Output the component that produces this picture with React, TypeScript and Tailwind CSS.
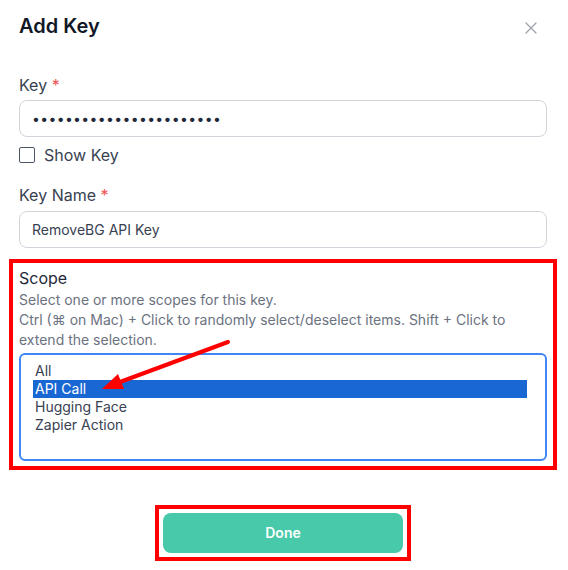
import { X } from 'lucide-react';

const scopes = ['All', 'API Call', 'Hugging Face', 'Zapier Action'];

function Label({ text, className = '' }: { text: string; className?: string }) {
    return (
        <div className={`text-base leading-6 text-[#374151] ${className}`}>
            {text} <span className="text-[#f05252]">*</span>
        </div>
    );
}

export default function App() {
    return (
        <div className="relative h-[570px] w-[568px] overflow-hidden bg-white pr-[21px] pl-[19px] font-[Inter,sans-serif]">
            <div className="flex items-center justify-between pt-[12px]">
                <h2 className="text-[20px] leading-7 font-semibold text-[#111827]">Add Key</h2>
                <X size={20} strokeWidth={1.5} className="mt-1 mr-[6px] text-[#9ca3af]" />
            </div>

            <Label text="Key" className="mt-[33px]" />
            <input
                type="password"
                readOnly
                value="xxxxxxxxxxxxxxxxxxxxxxx"
                className="mt-[3px] block h-[37px] w-full rounded-lg border border-[#d1d5db] px-3 text-sm tracking-[0.35px] text-[#1f2937] outline-none"
            />
            <div className="mt-[6px] flex h-6 items-center gap-[9px]">
                <span className="block size-4 rounded-[2px] border border-[#4b5563]" />
                <span className="text-base text-[#374151]">Show Key</span>
            </div>

            <Label text="Key Name" className="mt-[16px]" />
            <div className="mt-[4px] flex h-[37px] items-center rounded-lg border border-[#d1d5db] px-3 text-sm text-[#374151]">
                RemoveBG API Key
            </div>

            <div className="-mx-[10px] mt-[11px] border-4 border-[#ff0000] px-[6px] pt-[3px] pb-[5px]">
                <div className="text-base leading-6 text-[#1f2937]">Scope</div>
                <p className="text-sm leading-5 text-[#6b7280]">
                    Select one or more scopes for this key.
                    <br />
                    Ctrl (⌘ on Mac) + Click to randomly select/deselect items. Shift + Click to
                    <br />
                    extend the selection.
                </p>
                <div className="mt-[3px] h-[108px] rounded-md border-2 border-[#4285f4] pt-[7px] pr-[18px] pl-[12px]">
                    {scopes.map((s) => (
                        <div
                            key={s}
                            className={`h-[18px] px-[2px] text-sm leading-[18px] ${
                                s === 'API Call' ? 'bg-[#1967d2] text-white' : 'text-[#374151]'
                            }`}
                        >
                            {s}
                        </div>
                    ))}
                </div>
            </div>

            <div className="mt-[35px] flex justify-center">
                <div className="border-4 border-[#ff0000] p-[4px]">
                    <button className="h-10 w-[240px] rounded-lg bg-[#48c9a9] text-sm font-semibold text-white">
                        Done
                    </button>
                </div>
            </div>

            <svg className="pointer-events-none absolute inset-0" width={568} height={570}>
                <line x1={228} y1={342} x2={120} y2={382} stroke="#ff0000" strokeWidth={4} strokeLinecap="round" />
                <polygon points="102,389 124,389 118,374" fill="#ff0000" />
            </svg>
        </div>
    );
}
